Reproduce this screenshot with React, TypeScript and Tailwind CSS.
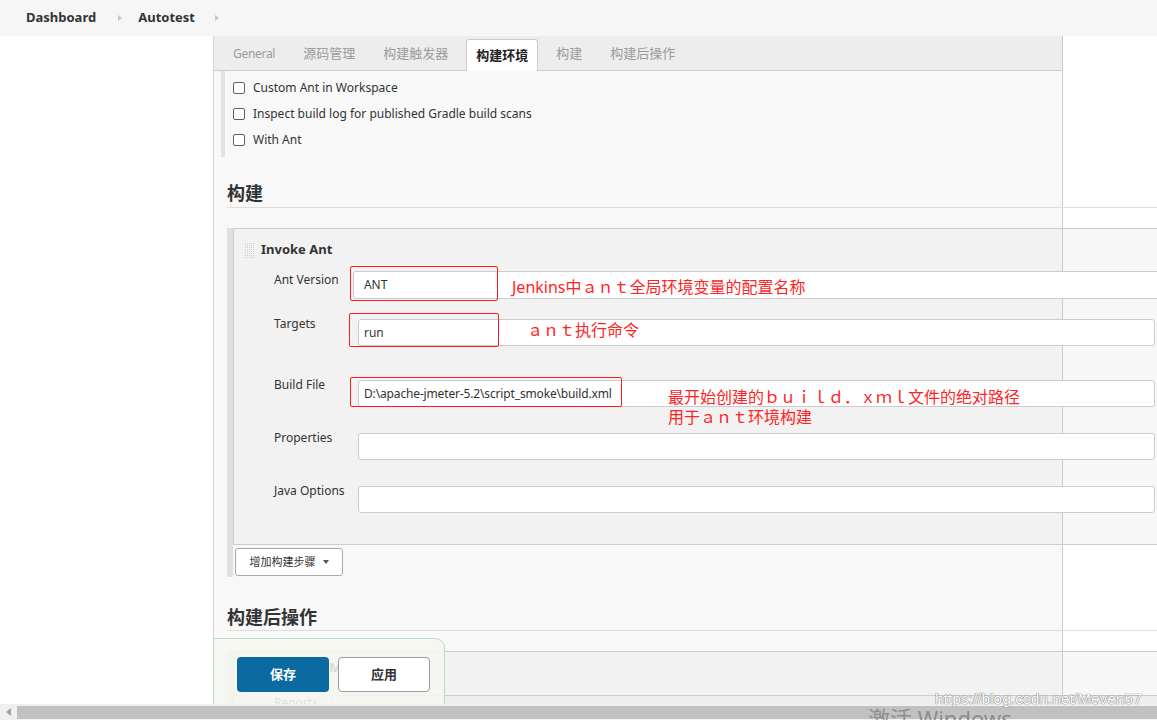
import React from 'react';

const tabs = ['General', '源码管理', '构建触发器', '构建环境', '构建', '构建后操作'];
const envOptions = ['Custom Ant in Workspace', 'Inspect build log for published Gradle build scans', 'With Ant'];

// section backgrounds: panel colour up to the right rule, lighter beyond it
const sectionBg = 'bg-[linear-gradient(to_right,#f8f8f8_848px,#cccccc_848px,#cccccc_849px,#ffffff_849px)]';
const boxBg = 'bg-[linear-gradient(to_right,#f2f2f2_828px,#cccccc_828px,#cccccc_829px,#f7f7f7_829px)]';

function Crumb() {
    return <span className="inline-block border-y-[3px] border-y-transparent border-l-[4px] border-l-[#c4c4c4]" />;
}

function DragHandle() {
    return (
        <span className="inline-block w-[10px] h-[16px] bg-[linear-gradient(90deg,#f2f2f2_1px,transparent_1px),linear-gradient(#f2f2f2_1px,transparent_1px)] bg-[length:2px_2px] bg-[#d0d0d0]" />
    );
}

function Field({ className }: { className: string }) {
    return <div className={'bg-white border border-[#cccccc] rounded-[3px] ' + className} />;
}

function Note({ className, children }: { className: string; children: React.ReactNode }) {
    return (
        <div className={'absolute text-[16px] leading-[20px] text-[#ff2424] whitespace-nowrap ' + className}>
            {children}
        </div>
    );
}

export default function App() {
    return (
        <div className="relative w-[1157px] h-[720px] overflow-hidden bg-white flex flex-col font-['Noto_Sans','Noto_Sans_CJK_SC',sans-serif] text-[#333]">
            {/* breadcrumb */}
            <div className="h-9 shrink-0 bg-[#f6f6f6] flex items-center pl-[26px] text-[13px] font-bold text-[#333]">
                <span>Dashboard</span>
                <span className="ml-[22px] mr-[16px] flex"><Crumb /></span>
                <span>Autotest</span>
                <span className="ml-[20px] flex"><Crumb /></span>
            </div>

            <div className="relative flex-1 flex overflow-hidden">
                <div className="w-[213px] shrink-0" />
                <div className="w-[960px] shrink-0 border-l border-[#d4d4d4] text-[12px]">
                    <div className="w-[849px] border-r border-[#cccccc]">
                        <div className="flex items-end h-[35px] pl-[9px] gap-[8px] bg-[#ededed] border-b border-[#cccccc]">
                            {tabs.map((t) =>
                                t === '构建环境' ? (
                                    <div key={t} className="h-[32px] -mb-px px-[9px] flex items-center bg-white border border-b-0 border-[#cccccc] rounded-t-[3px] font-bold text-[13px] text-[#222]">
                                        {t}
                                    </div>
                                ) : (
                                    <div key={t} className="h-[32px] px-[10px] flex items-center text-[13px] text-[#9b9b9b]">
                                        <span className={t === 'General' ? 'text-[12px] tracking-[-0.3px]' : ''}>{t}</span>
                                    </div>
                                )
                            )}
                        </div>
                        <div className="bg-[#f8f8f8] pl-[7px]">
                            <div className="border-l-4 border-[#e2e2e2] pl-[8px] py-[4px]">
                                {envOptions.map((o) => (
                                    <div key={o} className="h-[26px] flex items-center gap-[8px]">
                                        <span className="w-[12px] h-[12px] border border-[#5f5f5f] rounded-[2px] bg-white" />
                                        <span>{o}</span>
                                    </div>
                                ))}
                            </div>
                        </div>
                    </div>

                    {/* 构建 */}
                    <div className={sectionBg + ' pl-[13px] pt-[24px]'}>
                        <div className="border-b border-[#dddddd] pb-[2px] text-[18px] leading-[24px] font-bold text-[#333]">构建</div>
                    </div>
                    <div className={sectionBg + ' pl-[13px] pt-[20px]'}>
                        <div className="w-[946px] border-l-[6px] border-[#e0e0e0]">
                            <div className={boxBg + ' border border-[#cccccc] pb-[31px]'}>
                                <div className="flex items-center h-[18px] mt-[12px] ml-[10px] gap-[7px]">
                                    <DragHandle />
                                    <span className="font-bold text-[13px]">Invoke Ant</span>
                                </div>

                                <div className="relative flex items-start pl-[40px] mt-[12px]">
                                    <div className="w-[79px] leading-[18px]">Ant Version</div>
                                    <div className="w-[820px] h-[28px] bg-white border border-[#cccccc] rounded-[3px] flex items-center pl-[10px] text-[12px]">ANT</div>
                                    <div className="absolute left-[116px] top-[-5px] w-[148px] h-[35px] border border-[#ff1a1a] rounded-[2px]" />
                                    <Note className="left-[278px] top-[6px]">Jenkins中ａｎｔ全局环境变量的配置名称</Note>
                                </div>

                                <div className="relative flex items-start pl-[40px] mt-[20px]">
                                    <div className="w-[84px] leading-[18px] -mt-[4px]">Targets</div>
                                    <div className="w-[797px] h-[27px] bg-white border border-[#cccccc] rounded-[3px] flex items-center pl-[5px] text-[12px]">run</div>
                                    <div className="absolute left-[115px] top-[-6px] w-[150px] h-[34px] border border-[#ff1a1a] rounded-[2px]" />
                                    <Note className="left-[293px] top-[1px]">ａｎｔ执行命令</Note>
                                </div>

                                <div className="relative flex items-start pl-[40px] mt-[34px]">
                                    <div className="w-[84px] leading-[18px] -mt-[4px]">Build File</div>
                                    <div className="w-[797px] h-[27px] bg-white border border-[#cccccc] rounded-[3px] flex items-center pl-[5px] text-[12px] tracking-[-0.15px]">
                                        D:\apache-jmeter-5.2\script_smoke\build.xml
                                    </div>
                                    <div className="absolute left-[116px] top-[-3px] w-[272px] h-[30px] border border-[#ff1a1a] rounded-[2px]" />
                                    <Note className="left-[434px] top-[7px]">
                                        <div>最开始创建的ｂｕｉｌｄ．ｘｍｌ文件的绝对路径</div>
                                        <div>用于ａｎｔ环境构建</div>
                                    </Note>
                                </div>

                                <div className="flex items-start pl-[40px] mt-[26px]">
                                    <div className="w-[84px] leading-[18px] -mt-[4px]">Properties</div>
                                    <Field className="w-[797px] h-[27px]" />
                                </div>

                                <div className="flex items-start pl-[40px] mt-[26px]">
                                    <div className="w-[84px] leading-[18px] -mt-[4px]">Java Options</div>
                                    <Field className="w-[797px] h-[27px]" />
                                </div>
                            </div>
                            <div className="pt-[3px] pb-[1px] pl-[2px]">
                                <button className="w-[108px] h-[28px] bg-white border border-[#a9a9a9] rounded-[3px] flex items-center justify-center gap-[7px] text-[11px] text-[#333]">
                                    增加构建步骤
                                    <span className="border-x-[3px] border-x-transparent border-t-[4px] border-t-[#555]" />
                                </button>
                            </div>
                        </div>
                    </div>

                    {/* 构建后操作 */}
                    <div className={sectionBg + ' pl-[13px] pt-[28px]'}>
                        <div className="border-b border-[#dddddd] pb-[1px] text-[18px] leading-[24px] font-bold text-[#333]">构建后操作</div>
                    </div>
                    <div className={sectionBg + ' pl-[13px] pt-[20px]'}>
                        <div className="w-[946px] border-l-[6px] border-[#e0e0e0]">
                            <div className={boxBg + ' border border-[#cccccc] border-b-0'}>
                                <div className="flex items-center h-[18px] mt-[7px] ml-[10px] gap-[7px]">
                                    <DragHandle />
                                    <span className="font-bold text-[13px]">Publish HTML reports</span>
                                </div>
                                <div className="flex items-start pl-[40px] mt-[18px]">
                                    <div className="w-[58px] leading-[18px] mt-[-1px] text-[#666]">Reports</div>
                                    <div className="flex-1 h-[40px] bg-[#eeeeee] border-t border-l border-[#cccccc]" />
                                </div>
                            </div>
                        </div>
                    </div>
                </div>

                {/* sticky save / apply bar */}
                <div className="absolute left-[213px] top-[602px] w-[232px] h-[90px] bg-[#f4f7ef]/85 border border-[#b6dcc1] rounded-tr-[10px] pt-[18px] pl-[23px] flex gap-[9px] items-start">
                    <button className="w-[92px] h-[35px] rounded-[4px] bg-[#0b6aa2] text-white font-bold text-[13px]">保存</button>
                    <button className="w-[92px] h-[35px] rounded-[4px] bg-white border border-[#9a9a9a] text-[#333] font-bold text-[13px]">应用</button>
                </div>
            </div>

            {/* horizontal scrollbar */}
            <div className="h-4 shrink-0 bg-[#f0f0f0] flex items-center">
                <span className="ml-[6px] border-y-[4px] border-y-transparent border-r-[5px] border-r-[#a3a3a3]" />
                <div className="ml-[6px] flex-1 h-[13px] bg-[#c1c1c1]" />
            </div>

            <div className="absolute left-[935px] top-[689px] text-[15.5px] leading-[20px] whitespace-nowrap text-white font-['Liberation_Sans',sans-serif] [text-shadow:0_0_1px_#666,0_0_1px_#666]">
                https://blog.csdn.net/Meven57
            </div>
            <div className="absolute left-[868px] top-[704px] text-[22px] leading-[28px] whitespace-nowrap text-[#8e8e8e] font-['Noto_Sans','Noto_Sans_CJK_SC',sans-serif]">
                激活 Windows
            </div>
        </div>
    );
}
